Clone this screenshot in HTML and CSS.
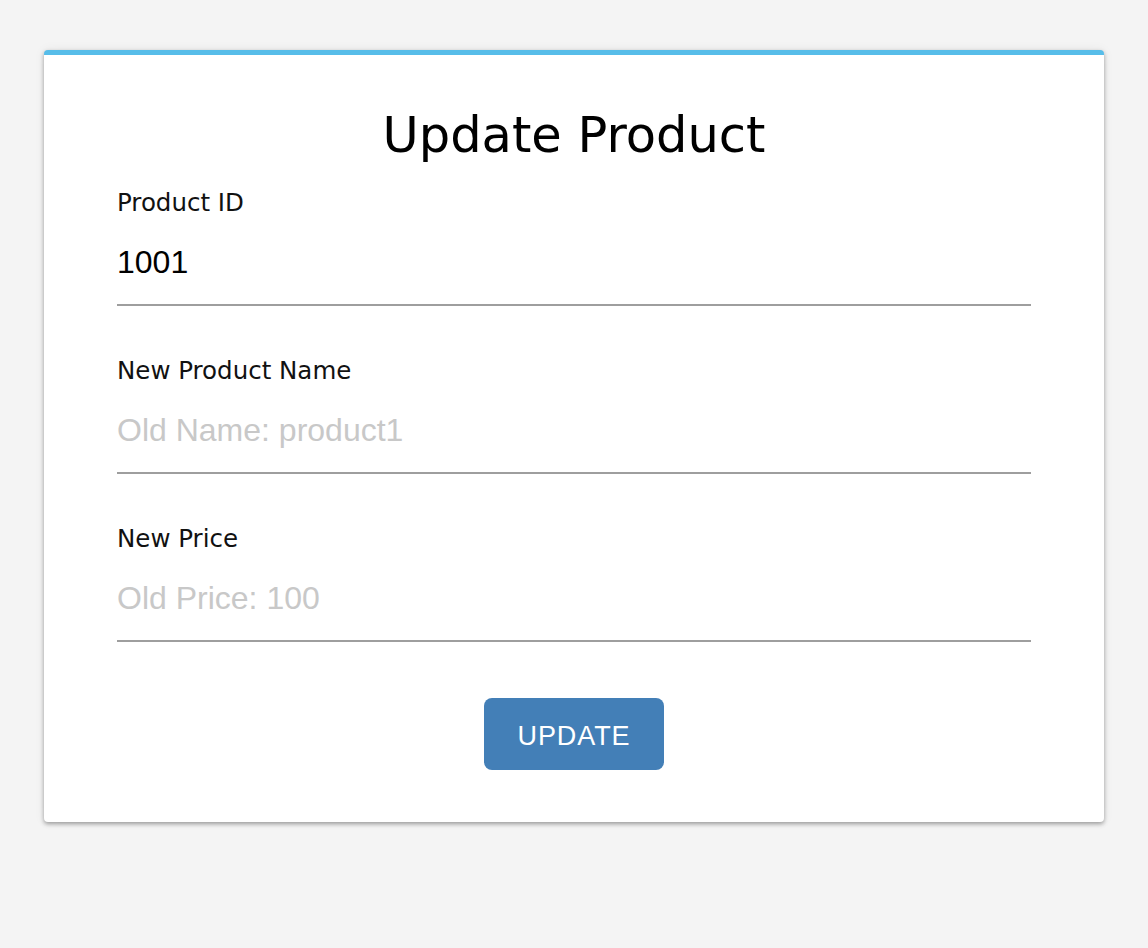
FILE: index.html
```html
<!DOCTYPE html>
<html lang="en">
<head>
<meta charset="utf-8">
<title>Update Product</title>
<link rel="stylesheet" href="styles.css">
</head>
<body>
  <main class="card">
    <h1 class="title">Update Product</h1>
    <form class="form">
      <div class="field">
        <label class="label" for="pid">Product ID</label>
        <input class="input" id="pid" type="text" value="1001">
      </div>
      <div class="field">
        <label class="label" for="pname">New Product Name</label>
        <input class="input" id="pname" type="text" placeholder="Old Name: product1">
      </div>
      <div class="field field-last">
        <label class="label" for="pprice">New Price</label>
        <input class="input" id="pprice" type="text" placeholder="Old Price: 100">
      </div>
      <div class="actions">
        <button class="button" type="button">UPDATE</button>
      </div>
    </form>
  </main>
</body>
</html>
```

FILE: styles.css
```css
html, body {
  margin: 0;
  padding: 0;
}
body {
  background: #f4f4f4;
  padding: 50px 44px;
  font-family: "DejaVu Sans", sans-serif;
}
.card {
  background: #ffffff;
  border-top: 5px solid #57bde9;
  border-radius: 4px;
  box-shadow: 0 2px 4px rgba(0, 0, 0, 0.35), 0 0 12px rgba(0, 0, 0, 0.06);
  padding: 52px 73px 52px 73px;
}
.title {
  margin: 0 0 26px 0;
  font-family: "DejaVu Sans", sans-serif;
  font-weight: normal;
  font-size: 49.5px;
  line-height: 56px;
  color: #000;
  text-align: center;
}
.form {
  display: flex;
  flex-direction: column;
}
.field {
  display: flex;
  flex-direction: column;
  margin-bottom: 51px;
}
.field-last {
  margin-bottom: 56px;
}
.label {
  font-family: "DejaVu Sans", sans-serif;
  font-size: 24.5px;
  line-height: 28px;
  color: #111;
  margin-bottom: 27px;
}
.input {
  font-family: "Liberation Sans", Arial, sans-serif;
  font-size: 32px;
  line-height: 36px;
  height: 36px;
  padding: 0 0 24px 0;
  margin: 0;
  border: none;
  border-bottom: 2px solid #9e9e9e;
  outline: none;
  color: #000;
  background: transparent;
  box-sizing: content-box;
  width: 100%;
}
.input::placeholder {
  color: #c8c8c8;
  opacity: 1;
}
.actions {
  display: flex;
  justify-content: center;
}
.button {
  width: 180px;
  height: 72px;
  border: none;
  border-radius: 8px;
  background: #437fb7;
  color: #fff;
  font-family: "Liberation Sans", Arial, sans-serif;
  font-size: 27px;
  letter-spacing: 0.9px;
  cursor: pointer;
  padding: 4px 0 0 0;
}
```
